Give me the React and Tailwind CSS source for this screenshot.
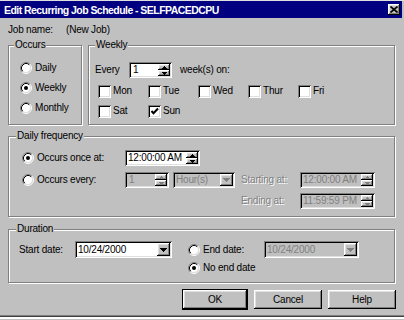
import React from 'react';

const raised = 'shadow-[inset_-1px_-1px_0_#000,inset_1px_1px_0_#fff,inset_-2px_-2px_0_#808080,inset_2px_2px_0_#dfdfdf]';
const sunken = 'shadow-[inset_1px_1px_0_#808080,inset_-1px_-1px_0_#fff,inset_2px_2px_0_#000,inset_-2px_-2px_0_#dfdfdf]';
const embossed = 'text-[#808080] [text-shadow:1px_1px_0_#fff]';

function Radio({ checked }) {
    return (
        <svg width="12" height="12" viewBox="0 0 12 12" className="shrink-0">
            <circle cx="6" cy="6" r="4.5" fill="#fff" />
            <path d="M2.11 9.89A5.5 5.5 0 0 1 9.89 2.11" stroke="#808080" fill="none" />
            <path d="M9.89 2.11A5.5 5.5 0 0 1 2.11 9.89" stroke="#fff" fill="none" />
            <path d="M2.82 9.18A4.5 4.5 0 0 1 9.18 2.82" stroke="#000" fill="none" />
            <path d="M9.18 2.82A4.5 4.5 0 0 1 2.82 9.18" stroke="#dfdfdf" fill="none" />
            {checked && <circle cx="6" cy="6" r="2" fill="#000" />}
        </svg>
    );
}

function Check({ checked }) {
    return (
        <div className={`w-[13px] h-[13px] shrink-0 bg-white ${sunken}`}>
            {checked && (
                <svg width="13" height="13" viewBox="0 0 13 13">
                    <path d="M3.5 6l2 2.2 4.5-4.7" stroke="#000" strokeWidth="2" fill="none" />
                </svg>
            )}
        </div>
    );
}

function Spin({ disabled }) {
    const c = disabled ? '#808080' : '#000';
    return (
        <div className="flex flex-col w-[12px] shrink-0">
            <div className={`flex-1 flex items-center justify-center bg-[#c0c0c0] ${raised}`}>
                <svg width="5" height="3" shapeRendering="crispEdges"><path d="M0 3h5L2.5 0z" fill={c} /></svg>
            </div>
            <div className={`flex-1 flex items-center justify-center bg-[#c0c0c0] ${raised}`}>
                <svg width="5" height="3" shapeRendering="crispEdges"><path d="M0 0h5L2.5 3z" fill={c} /></svg>
            </div>
        </div>
    );
}

function DropButton({ disabled }) {
    return (
        <div className={`w-[13px] shrink-0 flex items-center justify-center bg-[#c0c0c0] ${raised}`}>
            <svg width="7" height="4" shapeRendering="crispEdges">
                <path d="M0 0h7L3.5 4z" fill={disabled ? '#808080' : '#000'} />
            </svg>
        </div>
    );
}

function Group({ label, labelPos, className, children }) {
    return (
        <div className={`relative border border-[#808080] shadow-[inset_1px_1px_0_#fff,1px_1px_0_#fff] ${className}`}>
            <span className={`absolute -top-[7px] ${labelPos} px-[1px] bg-[#c0c0c0] leading-[12px]`}>{label}</span>
            {children}
        </div>
    );
}

export default function App() {
    return (
        <div className="w-[404px] h-[320px] bg-[#c0c0c0] overflow-hidden flex flex-col text-black text-[10px] leading-[12px] tracking-[-0.2px] font-['Liberation_Sans',Arial,sans-serif]">
            {/* title bar */}
            <div className="h-[1px] bg-[#dfdfdf]" />
            <div className="flex pr-[2px]">
                <div className="flex-1 h-[17px] bg-[#000080] flex items-center justify-between pl-[4px] pr-[2px]">
                    <span className="text-white font-bold text-[10.5px] tracking-[-0.55px]">Edit Recurring Job Schedule - SELFPACEDCPU</span>
                    <div className={`w-[12px] h-[11px] bg-[#c0c0c0] flex items-center justify-center ${raised}`}>
                        <svg width="8" height="7" viewBox="0 0 8 7">
                            <path d="M0.5 0.5L7.5 6.5M7.5 0.5L0.5 6.5" stroke="#000" strokeWidth="1.6" />
                        </svg>
                    </div>
                </div>
            </div>

            <div className="flex flex-col px-[8px]">
                <div className="mt-[6px] h-[12px] flex">
                    <span className="w-[58px]">Job name:</span>
                    <span>(New Job)</span>
                </div>

                <div className="mt-[9px] flex gap-[6px]">
                    <Group label="Occurs" labelPos="left-[5px]" className="w-[74px] h-[80px]">
                        <div className="pt-[12px] pl-[11px] flex flex-col">
                            <div className="h-[20px] flex items-center gap-[3px]"><Radio /><span>Daily</span></div>
                            <div className="h-[20px] flex items-center gap-[3px]"><Radio checked /><span>Weekly</span></div>
                            <div className="h-[20px] flex items-center gap-[3px]"><Radio /><span>Monthly</span></div>
                        </div>
                    </Group>

                    <Group label="Weekly" labelPos="left-[6px]" className="w-[307px] h-[80px]">
                        <div className="pt-[16px] flex flex-col">
                            <div className="h-[16px] flex items-center pl-[6px]">
                                <span className="w-[34px]">Every</span>
                                <div className={`w-[43px] h-[16px] p-[2px] flex bg-white ${sunken}`}>
                                    <span className="flex-1 pl-[2px] leading-[12px]">1</span>
                                    <Spin />
                                </div>
                                <span className="ml-[8px]">week(s) on:</span>
                            </div>
                            <div className="mt-[3px] pl-[9px] flex flex-col">
                                <div className="h-[20px] flex items-center">
                                    {['Mon', 'Tue', 'Wed', 'Thur', 'Fri'].map(d => (
                                        <div key={d} className="w-[50px] flex items-center gap-[2px]"><Check /><span>{d}</span></div>
                                    ))}
                                </div>
                                <div className="h-[20px] flex items-center">
                                    <div className="w-[50px] flex items-center gap-[2px]"><Check /><span>Sat</span></div>
                                    <div className="w-[50px] flex items-center gap-[2px]"><Check checked /><span>Sun</span></div>
                                </div>
                            </div>
                        </div>
                    </Group>
                </div>

                <Group label="Daily frequency" labelPos="left-[7px]" className="mt-[11px] w-[387px] h-[81px]">
                    <div className="pt-[13px] pl-[13px] flex flex-col">
                        <div className="h-[16px] flex items-center">
                            <div className="w-[103px] flex items-center gap-[3px]"><Radio checked /><span>Occurs once at:</span></div>
                            <div className={`w-[75px] h-[16px] p-[2px] flex bg-white ${sunken}`}>
                                <span className="flex-1 pl-[1px] leading-[12px]">12:00:00 AM</span>
                                <Spin />
                            </div>
                        </div>
                        <div className="mt-[6px] h-[16px] flex items-center">
                            <div className="w-[103px] flex items-center gap-[3px]"><Radio /><span>Occurs every:</span></div>
                            <div className={`w-[44px] h-[16px] p-[2px] flex bg-[#c0c0c0] ${sunken}`}>
                                <span className="flex-1 pl-[2px] leading-[12px] text-[#808080]">1</span>
                                <Spin disabled />
                            </div>
                            <div className={`ml-[4px] w-[62px] h-[16px] p-[2px] flex bg-[#c0c0c0] ${sunken}`}>
                                <span className="flex-1 pl-[1px] leading-[12px] text-[#808080]">Hour(s)</span>
                                <DropButton disabled />
                            </div>
                            <span className={`ml-[6px] w-[59px] ${embossed}`}>Starting at:</span>
                            <div className={`w-[75px] h-[16px] p-[2px] flex bg-[#c0c0c0] ${sunken}`}>
                                <span className="flex-1 pl-[1px] leading-[12px] text-[#808080]">12:00:00 AM</span>
                                <Spin disabled />
                            </div>
                        </div>
                        <div className="mt-[5px] h-[16px] flex items-center">
                            <span className={`ml-[219px] w-[59px] ${embossed}`}>Ending at:</span>
                            <div className={`w-[75px] h-[16px] p-[2px] flex bg-[#c0c0c0] ${sunken}`}>
                                <span className="flex-1 pl-[1px] leading-[12px] text-[#808080]">11:59:59 PM</span>
                                <Spin disabled />
                            </div>
                        </div>
                    </div>
                </Group>

                <Group label="Duration" labelPos="left-[7px]" className="mt-[12px] w-[387px] h-[54px]">
                    <div className="pt-[11px] pl-[10px] flex items-start">
                        <div className="h-[17px] w-[56px] flex items-center">Start date:</div>
                        <div className={`w-[97px] h-[17px] p-[2px] flex bg-white ${sunken}`}>
                            <span className="flex-1 pl-[1px] leading-[13px]">10/24/2000</span>
                            <DropButton />
                        </div>
                        <div className="ml-[16px] flex flex-col">
                            <div className="h-[17px] flex items-center">
                                <div className="w-[76px] flex items-center gap-[3px]"><Radio /><span>End date:</span></div>
                                <div className={`w-[95px] h-[17px] p-[2px] flex bg-[#c0c0c0] ${sunken}`}>
                                    <span className="flex-1 pl-[1px] leading-[13px] text-[#808080]">10/24/2000</span>
                                    <DropButton disabled />
                                </div>
                            </div>
                            <div className="mt-[3px] h-[14px] flex items-center gap-[3px]"><Radio checked /><span>No end date</span></div>
                        </div>
                    </div>
                </Group>

                <div className="mt-[6px] flex items-center justify-end gap-[6px]">
                    <div className="w-[66px] h-[21px] border border-black">
                        <div className={`w-full h-full flex items-center justify-center bg-[#c0c0c0] ${raised}`}>OK</div>
                    </div>
                    <div className={`w-[68px] h-[19px] flex items-center justify-center bg-[#c0c0c0] ${raised}`}>Cancel</div>
                    <div className={`w-[68px] h-[19px] flex items-center justify-center bg-[#c0c0c0] ${raised}`}>Help</div>
                </div>
            </div>

            {/* bottom frame */}
            <div className="mt-auto flex flex-col">
                <div className="h-[1px] bg-[#808080]" />
                <div className="h-[1px] bg-[#404040]" />
                <div className="h-[2px] bg-white" />
                <div className="h-[1px] bg-[#c0c0c0]" />
            </div>
        </div>
    );
}
